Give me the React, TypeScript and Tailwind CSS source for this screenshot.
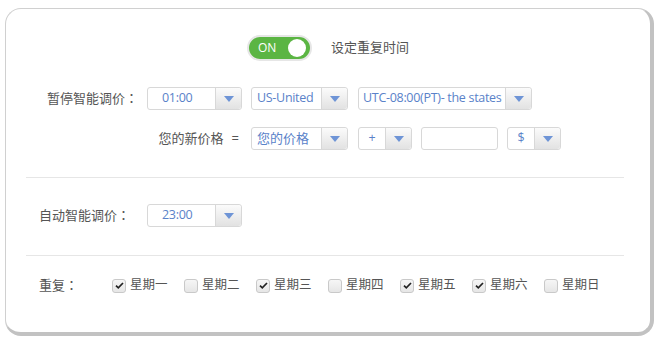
import React from "react";

const days = [
    { name: "星期一", checked: true },
    { name: "星期二", checked: false },
    { name: "星期三", checked: true },
    { name: "星期四", checked: false },
    { name: "星期五", checked: true },
    { name: "星期六", checked: true },
    { name: "星期日", checked: false },
];

function Caret() {
    return (
        <svg width="10" height="6" viewBox="0 0 10 6">
            <path d="M0 0H10L5 6Z" fill="#6e94d6" />
        </svg>
    );
}

function Colon() {
    return <span className="font-['Noto_Sans_CJK_TC',sans-serif]">：</span>;
}

function Select({ value, className, textClass }: { value: string; className: string; textClass: string }) {
    return (
        <div className={`flex h-[23px] rounded-[3px] border border-[#d8d8d8] bg-white ${className}`}>
            <div className={`flex flex-1 items-center overflow-hidden whitespace-nowrap text-[12.5px] tracking-[-0.3px] text-[#5a82c9] ${textClass}`}>{value}</div>
            <div className="flex w-[26px] items-center justify-center rounded-r-[3px] border-l border-[#d8d8d8] bg-linear-to-b from-[#fbfbfb] to-[#e2e2e2]">
                <Caret />
            </div>
        </div>
    );
}

function Checkbox({ checked }: { checked: boolean }) {
    return (
        <div className="flex h-[14px] w-[14px] items-center justify-center rounded-[3px] border border-[#c9c9c9] bg-linear-to-b from-[#f6f6f6] to-[#e6e6e6]">
            {checked && (
                <svg width="9" height="7" viewBox="0 0 9 7">
                    <path d="M1 3.6L3.3 5.8L8 1" fill="none" stroke="#222" strokeWidth="1.7" />
                </svg>
            )}
        </div>
    );
}

export default function App() {
    return (
        <div className="h-[345px] w-[660px] bg-white pl-[5px] pt-[8px] font-['Open_Sans','Noto_Sans_CJK_SC',sans-serif] text-[13px] text-[#555]">
            <div className="h-[328px] w-[649px] rounded-[16px] border-t border-l border-r-4 border-b-4 border-t-[#d0d0d0] border-l-[#d0d0d0] border-r-[#c2c2c2] border-b-[#c2c2c2] bg-white">
                {/* toggle */}
                <div className="mt-[26px] flex items-center justify-center gap-[19px]">
                    <div className="flex h-[26px] w-[65px] items-center justify-between rounded-full border-2 border-[#e6e6e6] bg-[#5bb543] pl-[9px] pr-[4px]">
                        <span className="text-[12px] text-white">ON</span>
                        <span className="h-[18px] w-[18px] rounded-full bg-white" />
                    </div>
                    <span className="text-[13px] text-[#555]">设定重复时间</span>
                </div>

                {/* row 1 */}
                <div className="mt-[26px] flex items-center">
                    <span className="w-[141px] pr-[9px] text-right">暂停智能调价<Colon /></span>
                    <Select value="01:00" className="w-[95px]" textClass="pl-[14px]" />
                    <Select value="US-United" className="ml-[9px] w-[97px]" textClass="pl-[5px]" />
                    <Select value="UTC-08:00(PT)- the states" className="ml-[10px] w-[174px]" textClass="pl-[4px]" />
                </div>

                {/* row 2 */}
                <div className="mt-[17px] flex items-center">
                    <span className="flex w-[245px] justify-end whitespace-nowrap pr-[12px]">
                        您的新价格<span className="ml-[8px]">=</span>
                    </span>
                    <Select value="您的价格" className="w-[97px]" textClass="pl-[5px] text-[13px] tracking-[0px]" />
                    <Select value="+" className="ml-[10px] w-[54px]" textClass="justify-center" />
                    <div className="ml-[9px] h-[23px] w-[77px] rounded-[3px] border border-[#d8d8d8] bg-white" />
                    <Select value="$" className="ml-[9px] w-[54px]" textClass="justify-center" />
                </div>

                <div className="ml-[20px] mt-[27px] h-px w-[598px] bg-[#e6e6e6]" />

                {/* row 3 */}
                <div className="mt-[26px] flex items-center">
                    <span className="w-[141px] pl-[33px]">自动智能调价<Colon /></span>
                    <Select value="23:00" className="w-[95px]" textClass="pl-[14px]" />
                </div>

                <div className="ml-[20px] mt-[28px] h-px w-[598px] bg-[#e6e6e6]" />

                {/* row 4 */}
                <div className="mt-[18px] flex h-[23px] items-center">
                    <span className="w-[106px] pl-[33px]">重复<Colon /></span>
                    {days.map((d) => (
                        <div key={d.name} className="flex w-[72px] items-center gap-[4px]">
                            <Checkbox checked={d.checked} />
                            <span className="text-[12.5px]">{d.name}</span>
                        </div>
                    ))}
                </div>
            </div>
        </div>
    );
}
